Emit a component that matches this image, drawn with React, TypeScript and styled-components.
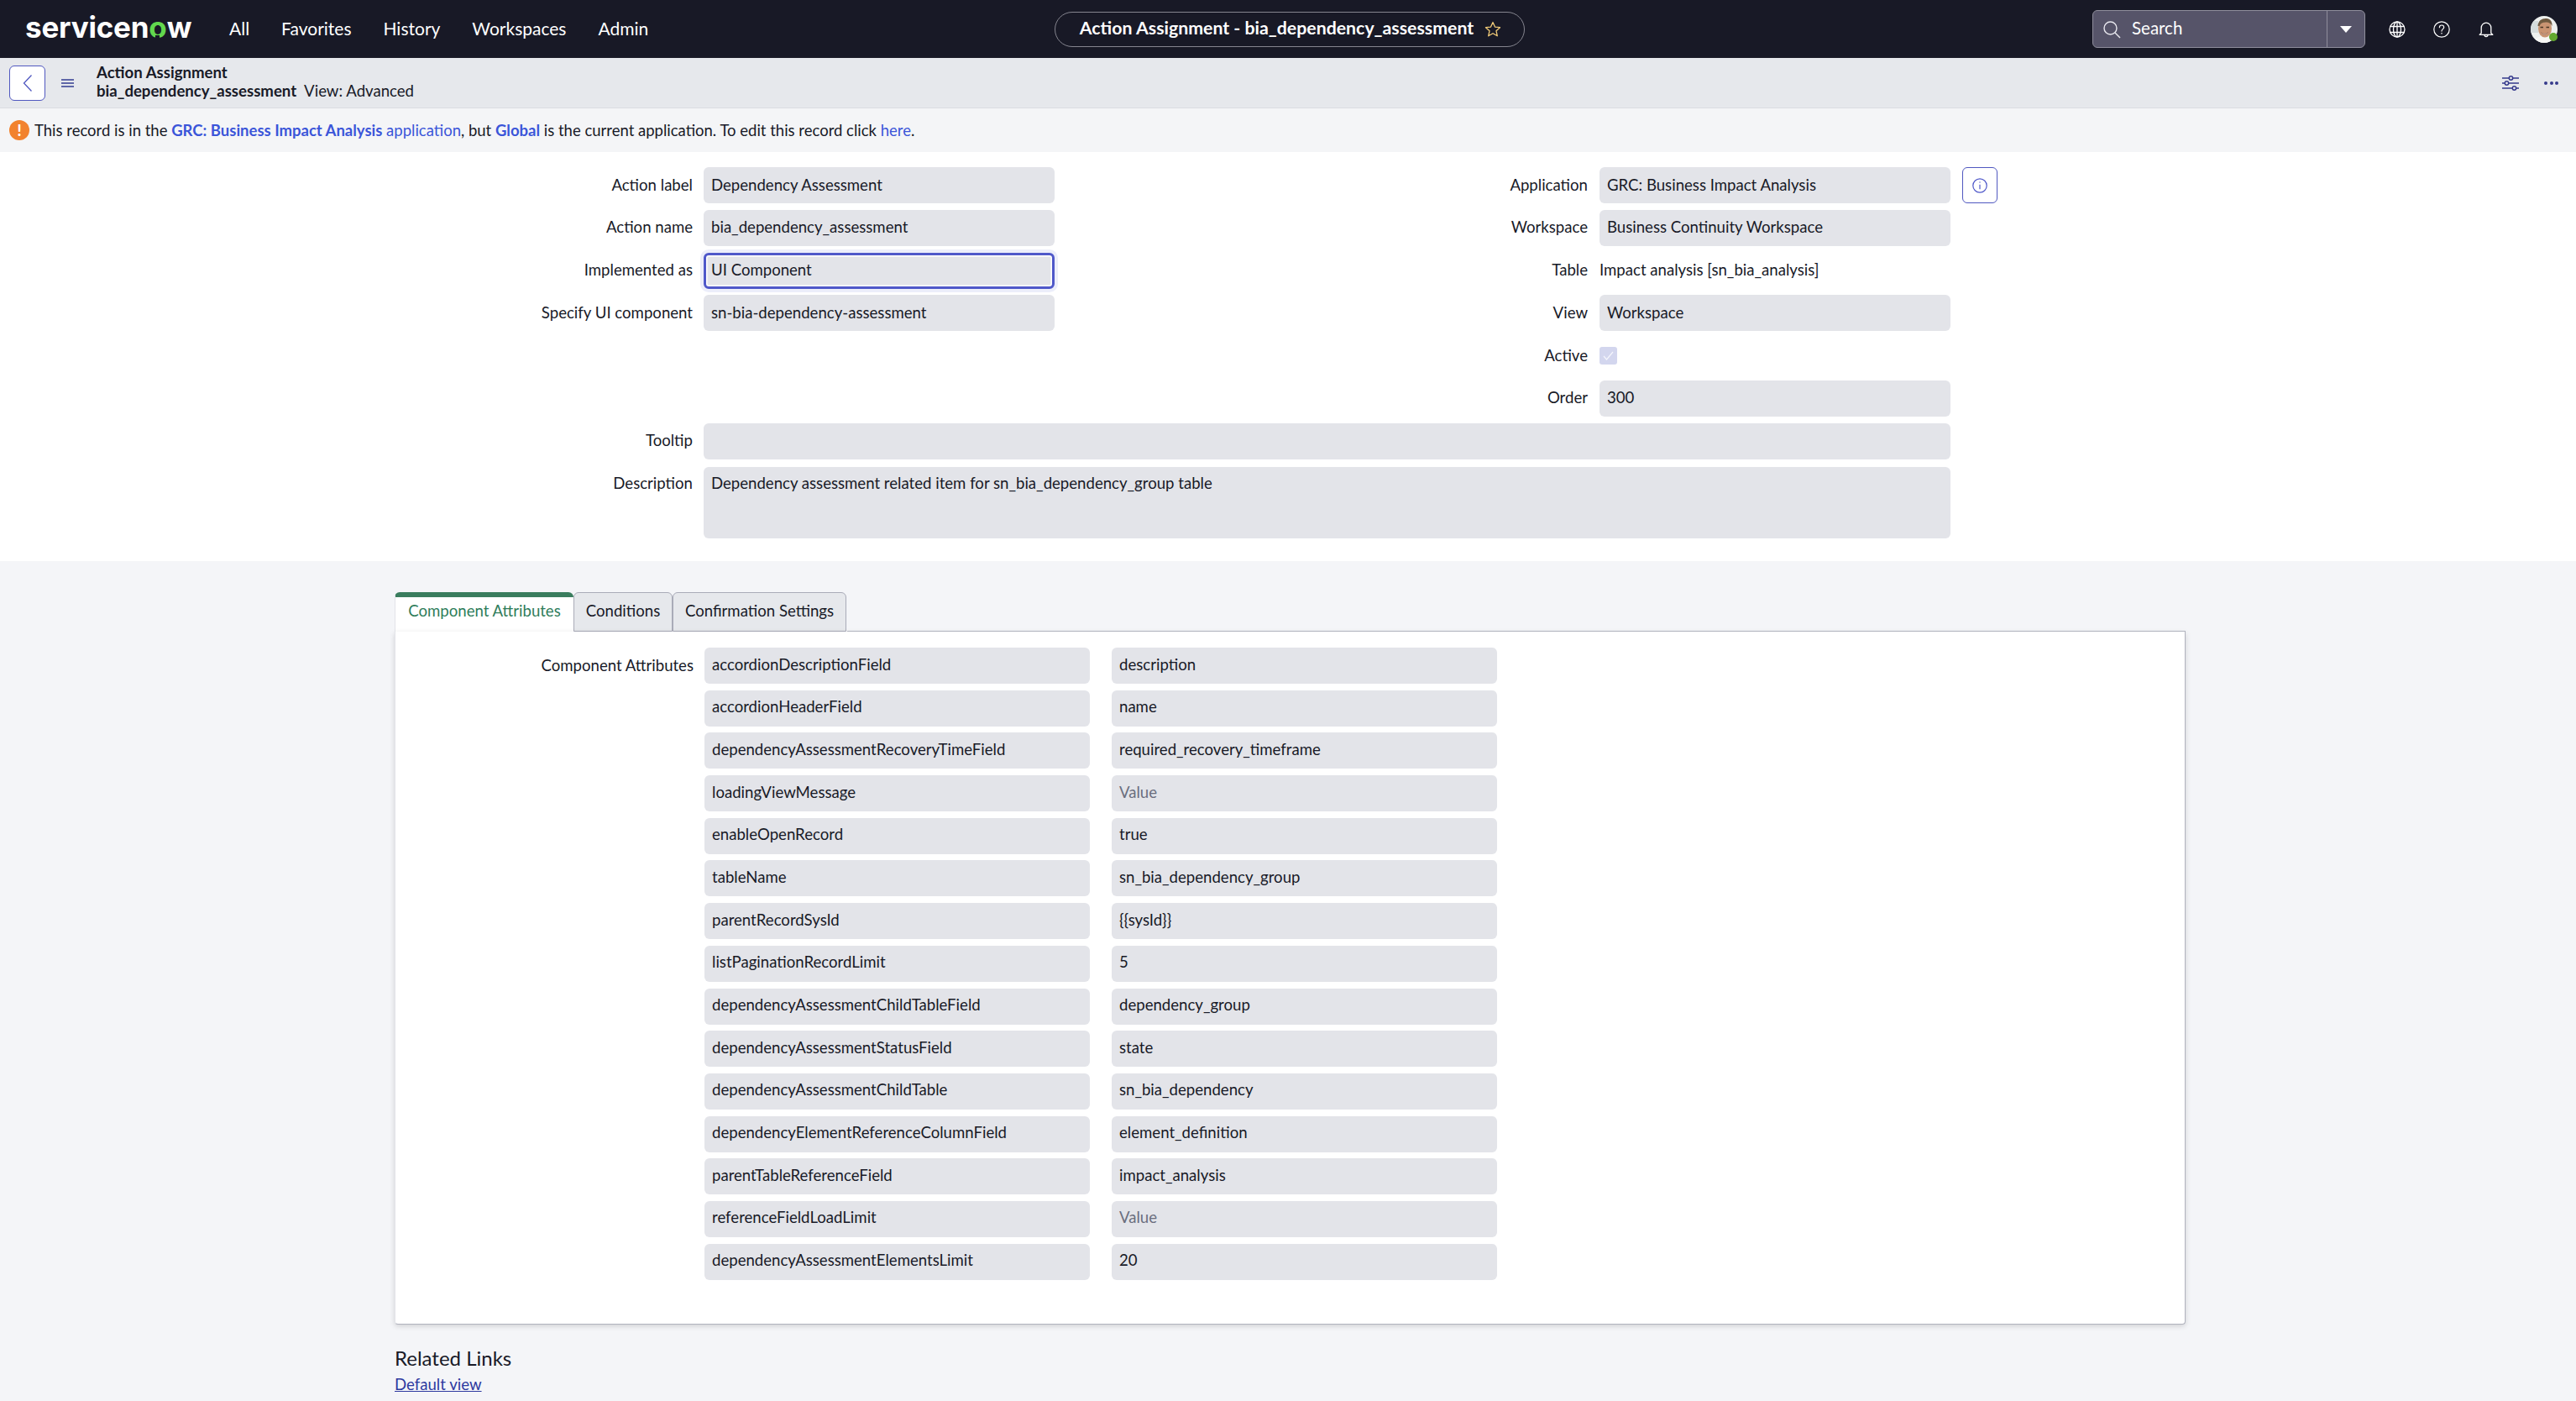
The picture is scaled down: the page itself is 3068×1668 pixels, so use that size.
import React from 'react';
import styled, { createGlobalStyle } from 'styled-components';

const leftFields = [
  { label: 'Action label', value: 'Dependency Assessment' },
  { label: 'Action name', value: 'bia_dependency_assessment' },
  { label: 'Implemented as', value: 'UI Component', focused: true },
  { label: 'Specify UI component', value: 'sn-bia-dependency-assessment' },
];

const attributes = [
  ['accordionDescriptionField', 'description'],
  ['accordionHeaderField', 'name'],
  ['dependencyAssessmentRecoveryTimeField', 'required_recovery_timeframe'],
  ['loadingViewMessage', ''],
  ['enableOpenRecord', 'true'],
  ['tableName', 'sn_bia_dependency_group'],
  ['parentRecordSysId', '{{sysId}}'],
  ['listPaginationRecordLimit', '5'],
  ['dependencyAssessmentChildTableField', 'dependency_group'],
  ['dependencyAssessmentStatusField', 'state'],
  ['dependencyAssessmentChildTable', 'sn_bia_dependency'],
  ['dependencyElementReferenceColumnField', 'element_definition'],
  ['parentTableReferenceField', 'impact_analysis'],
  ['referenceFieldLoadLimit', ''],
  ['dependencyAssessmentElementsLimit', '20'],
];

function App() {
  return (
    <Page>
      <GlobalStyle />
      <TopNav>
        <NavLeft>
          <Logo>
            servicen<LogoO>o</LogoO>w
          </Logo>
          <NavItem>All</NavItem>
          <NavItem>Favorites</NavItem>
          <NavItem>History</NavItem>
          <NavItem>Workspaces</NavItem>
          <NavItem>Admin</NavItem>
        </NavLeft>
        <TitlePill>
          <span>Action Assignment - bia_dependency_assessment</span>
          <svg width="20" height="20" viewBox="0 0 20 20" fill="none" stroke="#f1cb78" strokeWidth="1.3" strokeLinejoin="round">
            <path d="M10 1.5l2.5 5.6 6 .6-4.5 4.1 1.3 6-5.3-3.1-5.3 3.1 1.3-6L1.500 7.700l6-.6z" />
          </svg>
        </TitlePill>
        <NavRight>
          <SearchBox>
            <SearchMain>
              <svg width="22" height="22" viewBox="0 0 22 22" fill="none" stroke="#e8e8ee" strokeWidth="1.4">
                <circle cx="9.500" cy="9.500" r="7.500" />
                <path d="M15 15l6 6" />
              </svg>
              <SearchLabel>Search</SearchLabel>
            </SearchMain>
            <SearchCaret />
          </SearchBox>
          <IconSlot>
            <svg width="20" height="20" viewBox="0 0 20 20" fill="none" stroke="#fff" strokeWidth="1.3">
              <circle cx="10" cy="10" r="9" />
              <ellipse cx="10" cy="10" rx="4.500" ry="9" />
              <path d="M10 1v18M1.600 6.500h16.800M1.600 13.500h16.800" />
            </svg>
          </IconSlot>
          <IconSlot>
            <svg width="20" height="20" viewBox="0 0 20 20" fill="none" stroke="#fff" strokeWidth="1.2">
              <circle cx="10" cy="10" r="9.200" />
              <path d="M7.400 7.700c0-1.600 1.200-2.700 2.700-2.700s2.600 1 2.600 2.400c0 2.200-2.700 2.300-2.700 4.700" strokeLinecap="round" />
              <circle cx="10" cy="14.800" r="0.8" fill="#fff" stroke="none" />
            </svg>
          </IconSlot>
          <IconSlot>
            <svg width="18" height="20" viewBox="0 0 18 20" fill="none" stroke="#fff" strokeWidth="1.3" strokeLinejoin="round">
              <path d="M3.200 14.500V8a5.800 5.800 0 0 1 11.600 0v6.500l2 1.800H1.200z" />
              <path d="M7 16.500a2 2 0 0 0 4 0" />
            </svg>
          </IconSlot>
          <Avatar>
            <svg width="32" height="32" viewBox="0 0 32 32">
              <defs>
                <clipPath id="face-clip">
                  <circle cx="16" cy="16" r="16" />
                </clipPath>
              </defs>
              <g clipPath="url(#face-clip)">
                <rect width="32" height="32" fill="#eef0ee" />
                <rect x="0" y="6" width="9" height="14" fill="#d5dcdc" />
                <path d="M4 32c1-6 6-8 12-8s11 3 12 8z" fill="#f7f7f5" />
                <ellipse cx="17" cy="15" rx="8" ry="10.500" fill="#c99472" />
                <path d="M8.500 12C9 5 14 2.500 19 3c4 .3 7 3.500 6.500 9-1.500-3-3.500-4.500-6.500-4.500-3.500 0-7 .5-8.500 4.500z" fill="#6f5a40" />
                <path d="M11.500 13.500h3.500M18.500 13.500h3.500" stroke="#4a3626" strokeWidth="1.300" />
                <path d="M12.500 19.500c2 2.500 6 2.500 8 0-1 3.500-7 3.500-8 0z" fill="#fff" stroke="#8b5a42" strokeWidth="0.5" />
              </g>
            </svg>
            <AvatarDot />
          </Avatar>
        </NavRight>
      </TopNav>

      <SubBar>
        <BackButton>
          <svg width="12" height="22" viewBox="0 0 12 22" fill="none" stroke="#5058c0" strokeWidth="1.300">
            <path d="M10.500 1.500L1.500 11l9 9.500" />
          </svg>
        </BackButton>
        <Hamburger>
          <span />
          <span />
          <span />
        </Hamburger>
        <SubTitle>
          <strong>Action Assignment</strong>
          <SubLine>
            <strong>bia_dependency_assessment</strong>
            <span>View: Advanced</span>
          </SubLine>
        </SubTitle>
        <SubActions>
          <svg width="20" height="18" viewBox="0 0 20 18" fill="none" stroke="#363a8c" strokeWidth="1.500">
            <path d="M0 3h8M13 3h7M0 9h3M8 9h12M0 15h12M17 15h3" />
            <circle cx="10.500" cy="3" r="2.200" />
            <circle cx="5.500" cy="9" r="2.200" />
            <circle cx="14.500" cy="15" r="2.200" />
          </svg>
          <MoreDots>
            <span />
            <span />
            <span />
          </MoreDots>
        </SubActions>
      </SubBar>

      <MessageBar>
        <AlertIcon>!</AlertIcon>
        <span>
          This record is in the <a><b>GRC: Business Impact Analysis</b> application</a>, but <a><b>Global</b></a> is the
          current application. To edit this record click <a>here</a>.
        </span>
      </MessageBar>

      <FormArea>
        <FormColumns>
          <LeftColumn>
            {leftFields.map((field) => (
              <LeftRow key={field.label}>
                <FieldLabel>{field.label}</FieldLabel>
                <Field $focused={field.focused} $upper>{field.value}</Field>
              </LeftRow>
            ))}
          </LeftColumn>
          <RightColumn>
            <RightRow>
              <FieldLabel>Application</FieldLabel>
              <Field $upper>GRC: Business Impact Analysis</Field>
              <InfoButton>
                <svg width="18" height="18" viewBox="0 0 18 18" fill="none" stroke="#4f58c9" strokeWidth="1.200">
                  <circle cx="9" cy="9" r="8.200" />
                  <path d="M9 7.800v5.400" />
                  <circle cx="9" cy="5" r="0.700" fill="#4f58c9" stroke="none" />
                </svg>
              </InfoButton>
            </RightRow>
            <RightRow>
              <FieldLabel>Workspace</FieldLabel>
              <Field $upper>Business Continuity Workspace</Field>
            </RightRow>
            <RightRow>
              <FieldLabel>Table</FieldLabel>
              <PlainValue>Impact analysis [sn_bia_analysis]</PlainValue>
            </RightRow>
            <RightRow>
              <FieldLabel>View</FieldLabel>
              <Field $upper>Workspace</Field>
            </RightRow>
            <RightRow>
              <FieldLabel>Active</FieldLabel>
              <CheckBox>
                <svg width="13" height="11" viewBox="0 0 13 11" fill="none" stroke="#f5f6fc" strokeWidth="1.2">
                  <path d="M1 6l3.500 4L12 1" />
                </svg>
              </CheckBox>
            </RightRow>
            <RightRow>
              <FieldLabel>Order</FieldLabel>
              <Field $upper>300</Field>
            </RightRow>
          </RightColumn>
        </FormColumns>
        <WideRow>
          <FieldLabel>Tooltip</FieldLabel>
          <Field />
        </WideRow>
        <WideRow $top>
          <FieldLabel>Description</FieldLabel>
          <Field $multiline>Dependency assessment related item for sn_bia_dependency_group table</Field>
        </WideRow>
      </FormArea>

      <TabSection>
        <TabRow>
          <Tab $active $width={213}>Component Attributes</Tab>
          <Tab $width={118}>Conditions</Tab>
          <Tab $width={207}>Confirmation Settings</Tab>
        </TabRow>
        <TabCard>
          <AttributeGrid>
            {attributes.map(([name, value], index) => (
              <React.Fragment key={name}>
                <FieldLabel>{index === 0 ? 'Component Attributes' : ''}</FieldLabel>
                <Field>{name}</Field>
                <Field $placeholder={!value}>{value || 'Value'}</Field>
              </React.Fragment>
            ))}
          </AttributeGrid>
        </TabCard>
        <RelatedTitle>Related Links</RelatedTitle>
        <RelatedLink>Default view</RelatedLink>
      </TabSection>
    </Page>
  );
}

const GlobalStyle = createGlobalStyle`
  html, body {
    margin: 0;
    padding: 0;
    background: #f4f5f8;
  }
  * {
    box-sizing: border-box;
  }
`;

const Page = styled.div`
  width: 3068px;
  height: 1668px;
  overflow: hidden;
  font-family: Lato, 'Liberation Sans', sans-serif;
  font-size: 18.6px;
  color: #181a27;
  background: #f4f5f8;
`;

const TopNav = styled.header`
  display: grid;
  grid-template-columns: 1256px 560px 1fr;
  align-items: center;
  height: 69px;
  background: #181926;
  color: #fff;
`;

const NavLeft = styled.nav`
  display: flex;
  align-items: center;
  gap: 38px;
  padding-left: 30px;
`;

const Logo = styled.div`
  width: 205px;
  padding-bottom: 4px;
  font-family: Inter, sans-serif;
  font-size: 35px;
  font-weight: 700;
  letter-spacing: -0.2px;
  line-height: 1;
  white-space: nowrap;
`;

const LogoO = styled.span`
  position: relative;
  color: #62d84e;
  &::after {
    content: '';
    position: absolute;
    left: 50%;
    bottom: 5px;
    width: 5px;
    height: 6px;
    margin-left: -2.5px;
    background: #181926;
  }
`;

const NavItem = styled.a`
  padding-bottom: 3px;
  font-size: 21px;
`;

const TitlePill = styled.div`
  display: flex;
  align-items: center;
  justify-content: center;
  gap: 13px;
  height: 42px;
  padding-left: 2px;
  border: 1px solid #85858f;
  border-radius: 21px;
  font-size: 21.3px;
  font-weight: 700;
  span {
    padding-bottom: 3px;
  }
`;

const NavRight = styled.div`
  display: flex;
  align-items: center;
  justify-content: flex-end;
  padding-right: 22px;
`;

const SearchBox = styled.div`
  display: flex;
  width: 325px;
  height: 45px;
  margin-right: 11px;
  background: #565469;
  border: 1px solid #8f8e9c;
  border-radius: 6px;
`;

const SearchMain = styled.div`
  display: flex;
  flex: 1;
  align-items: center;
  gap: 13px;
  padding-left: 11px;
  border-right: 1px solid #8f8e9c;
`;

const SearchLabel = styled.span`
  padding-bottom: 3px;
  font-size: 20.5px;
`;

const SearchCaret = styled.div`
  width: 44px;
  position: relative;
  &::after {
    content: '';
    position: absolute;
    left: 15px;
    top: 18px;
    border-left: 7px solid transparent;
    border-right: 7px solid transparent;
    border-top: 8px solid #fff;
  }
`;

const IconSlot = styled.div`
  display: flex;
  align-items: center;
  justify-content: center;
  width: 53px;
`;

const Avatar = styled.div`
  position: relative;
  width: 32px;
  height: 32px;
  margin-left: 27px;
`;

const AvatarDot = styled.span`
  position: absolute;
  right: 0;
  bottom: 2px;
  width: 10px;
  height: 10px;
  border-radius: 50%;
  background: #62a82e;
`;

const SubBar = styled.div`
  display: flex;
  align-items: center;
  height: 60px;
  padding-left: 11px;
  padding-right: 21px;
  background: #e6e8ec;
  border-bottom: 1px solid #dadde2;
`;

const BackButton = styled.button`
  display: flex;
  align-items: center;
  justify-content: center;
  width: 43px;
  height: 42px;
  padding: 0;
  background: #fff;
  border: 1px solid #5058c0;
  border-radius: 6px;
`;

const Hamburger = styled.div`
  display: flex;
  flex-direction: column;
  gap: 2px;
  width: 15px;
  margin-left: 19px;
  margin-right: 27px;
  span {
    height: 2px;
    background: #5f67a8;
  }
`;

const SubTitle = styled.div`
  display: flex;
  flex-direction: column;
  padding-bottom: 3px;
  line-height: 22px;
  strong {
    font-weight: 700;
  }
`;

const SubLine = styled.div`
  display: flex;
  gap: 9px;
`;

const SubActions = styled.div`
  display: flex;
  align-items: center;
  gap: 30px;
  margin-left: auto;
`;

const MoreDots = styled.div`
  display: flex;
  gap: 2.500px;
  span {
    width: 4px;
    height: 4px;
    border-radius: 50%;
    background: #363a8c;
  }
`;

const MessageBar = styled.div`
  display: flex;
  align-items: center;
  gap: 6px;
  height: 52px;
  padding-left: 11px;
  font-size: 18.5px;
  background: #f4f5f7;
  a {
    color: #3b55d9;
  }
  b {
    font-weight: 700;
  }
`;

const AlertIcon = styled.span`
  display: flex;
  align-items: center;
  justify-content: center;
  width: 24px;
  height: 24px;
  border-radius: 50%;
  background: #f2822e;
  color: #fff;
  font-size: 18px;
  font-weight: 900;
`;

const FormArea = styled.section`
  height: 487px;
  padding-top: 18px;
  background: #fff;
`;

const FormColumns = styled.div`
  display: flex;
`;

const LeftColumn = styled.div`
  display: flex;
  flex-direction: column;
  gap: 7.800px;
  width: 1256px;
`;

const RightColumn = styled.div`
  display: flex;
  flex-direction: column;
  gap: 7.800px;
`;

const LeftRow = styled.div`
  display: grid;
  grid-template-columns: 825px 418px;
  column-gap: 13px;
  align-items: center;
`;

const RightRow = styled.div`
  display: grid;
  grid-template-columns: 635px 418px 42px;
  column-gap: 14px;
  align-items: center;
  min-height: 43px;
`;

const WideRow = styled.div<{ $top?: boolean }>`
  display: grid;
  grid-template-columns: 825px 1485px;
  column-gap: 13px;
  align-items: ${(props) => (props.$top ? 'start' : 'center')};
  margin-top: ${(props) => (props.$top ? '9px' : '8px')};
  ${(props) => props.$top && 'label { padding-top: 8px; }'}
`;

const FieldLabel = styled.label`
  padding-bottom: 1px;
  text-align: right;
  white-space: nowrap;
  line-height: 23px;
`;

const fieldPaddingTop = (props: { $focused?: boolean; $multiline?: boolean; $upper?: boolean }) => {
  if (props.$focused) return '6px';
  if (props.$multiline) return '8px';
  return props.$upper ? '9.5px' : '8.5px';
};

const Field = styled.div<{ $focused?: boolean; $multiline?: boolean; $placeholder?: boolean; $upper?: boolean }>`
  height: ${(props) => (props.$multiline ? '85px' : '43px')};
  padding-right: 9px;
  padding-left: ${(props) => (props.$focused ? '6px' : '9px')};
  padding-top: ${fieldPaddingTop};
  line-height: 23px;
  white-space: nowrap;
  background: #e3e4e9;
  border-radius: 6px;
  color: ${(props) => (props.$placeholder ? '#6a6e7e' : '#181a27')};
  ${(props) =>
    props.$focused &&
    `border: 3px solid #4f58c9;
     box-shadow: 0 0 0 4px #eceefa, inset 0 0 0 1.5px #fff;`}
`;

const PlainValue = styled.div`
  padding-bottom: 2px;
  line-height: 23px;
`;

const InfoButton = styled.button`
  display: flex;
  align-items: center;
  justify-content: center;
  width: 42px;
  height: 43px;
  padding: 0;
  background: #fff;
  border: 1px solid #5058c0;
  border-radius: 6px;
`;

const CheckBox = styled.div`
  display: flex;
  align-items: center;
  justify-content: center;
  width: 21px;
  height: 21px;
  border-radius: 3px;
  background: #d3d6ee;
`;

const TabSection = styled.section`
  width: 2133px;
  margin-left: 470px;
  padding-top: 37px;
`;

const TabRow = styled.div`
  display: flex;
  height: 47px;
`;

const Tab = styled.div<{ $active?: boolean; $width: number }>`
  display: flex;
  align-items: center;
  justify-content: center;
  width: ${(props) => props.$width}px;
  padding-bottom: ${(props) => (props.$active ? '9px' : '3px')};
  background: ${(props) => (props.$active ? '#fff' : '#e6e8ec')};
  color: ${(props) => (props.$active ? '#2f7d5b' : '#181a27')};
  border: 1px solid #a9abb8;
  border-top: ${(props) => (props.$active ? '6px solid #3a7d5e' : '1px solid #a9abb8')};
  border-left: ${(props) => (props.$active ? '1px solid #e3e4e9' : '1px solid #a9abb8')};
  border-bottom: ${(props) => (props.$active ? '0' : '1px solid #a9abb8')};
  border-right: ${(props) => (props.$active ? '0' : '1px solid #a9abb8')};
  border-radius: 6px 6px 0 0;
`;

const TabCard = styled.div`
  height: 825px;
  padding-top: 19px;
  background: #fff;
  border: 1px solid #b0b2bd;
  border-top: 0;
  border-left-color: #e3e4e9;
  border-radius: 0 0 4px 4px;
  box-shadow: 0 2px 6px rgba(0, 0, 0, 0.15);
  position: relative;
  &::before {
    content: '';
    position: absolute;
    top: -1px;
    left: 538px;
    right: -1px;
    height: 1px;
    background: #b0b2bd;
  }
`;

const AttributeGrid = styled.div`
  display: grid;
  grid-template-columns: 355px 459px 472px;
  grid-auto-rows: 43px;
  column-gap: 13px;
  row-gap: 7.700px;
  align-items: center;
  & > div:nth-child(3n) {
    margin-left: 13px;
  }
`;

const RelatedTitle = styled.h3`
  margin: 26px 0 0;
  font-size: 24px;
  font-weight: 400;
  line-height: 28px;
`;

const RelatedLink = styled.a`
  display: block;
  margin-top: 6px;
  line-height: 23px;
  color: #2e3aa0;
  text-decoration: underline;
`;

export default App;
